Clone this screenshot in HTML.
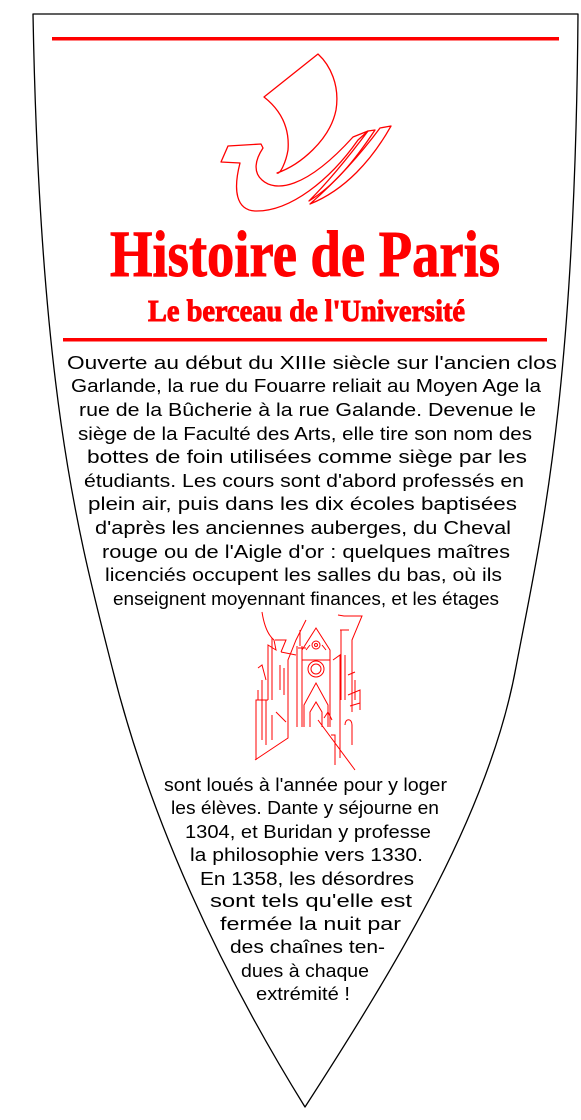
<!DOCTYPE html>
<html><head><meta charset="utf-8"><style>
html,body{margin:0;padding:0;background:#fff;width:581px;height:1120px;overflow:hidden}
svg{display:block}
.b{font-family:"Liberation Sans",sans-serif;font-size:18px;fill:#000}
.t{font-family:"Liberation Serif",serif;font-weight:bold;fill:#f00;stroke:#f00}
</style></head><body>
<svg width="581" height="1120" viewBox="0 0 581 1120" xmlns="http://www.w3.org/2000/svg">
<path d="M33,14 L578,14 C575,400 540,540 516,667 C490,810 400,960 305,1107 C220,970 150,820 112,667 C80,540 40,400 33,14 Z" fill="#fff" stroke="#000" stroke-width="1.3" stroke-linejoin="round"/>
<rect x="52" y="37" width="507" height="3.5" fill="#f00"/>
<rect x="63" y="338" width="484" height="3.5" fill="#f00"/>
<g fill="none" stroke="#f00" stroke-width="1.3" stroke-linejoin="round">
<path d="M318,54 L264,97 C278,108 290,125 288,150 C286,162 280,175 277,173 C300,165 330,140 336,110 C340,85 330,65 318,54 Z"/>
<path d="M221,162 L228,146 L261,144 L263,148 C255,160 253,172 262,180 C275,192 305,190 353,137 L368,131 L358,140 C330,180 290,212 255,211 C236,210 233,190 240,163 Z"/>
<path d="M368,131 L375,130 C355,160 335,185 309,201 C330,180 350,155 368,131 Z"/>
<path d="M380,128 L391,126 C372,160 345,190 310,204 C335,182 360,155 380,128 Z"/>
</g>
<text class="t" x="110" y="276" font-size="66" stroke-width="1" textLength="390" lengthAdjust="spacingAndGlyphs">Histoire de Paris</text>
<text class="t" x="148" y="321" font-size="31" stroke-width="1" textLength="317" lengthAdjust="spacingAndGlyphs">Le berceau de l'Université</text>
<g class="b">
<text x="67" y="369" textLength="490" lengthAdjust="spacingAndGlyphs">Ouverte au début du XIIIe siècle sur l'ancien clos</text>
<text x="71" y="392" textLength="470" lengthAdjust="spacingAndGlyphs">Garlande, la rue du Fouarre reliait au Moyen Age la</text>
<text x="79" y="416" textLength="457" lengthAdjust="spacingAndGlyphs">rue de la Bûcherie à la rue Galande. Devenue le</text>
<text x="78" y="440" textLength="454" lengthAdjust="spacingAndGlyphs">siège de la Faculté des Arts, elle tire son nom des</text>
<text x="87" y="463" textLength="440" lengthAdjust="spacingAndGlyphs">bottes de foin utilisées comme siège par les</text>
<text x="84" y="487" textLength="440" lengthAdjust="spacingAndGlyphs">étudiants. Les cours sont d'abord professés en</text>
<text x="88" y="510" textLength="429" lengthAdjust="spacingAndGlyphs">plein air, puis dans les dix écoles baptisées</text>
<text x="95" y="534" textLength="416" lengthAdjust="spacingAndGlyphs">d'après les anciennes auberges, du Cheval</text>
<text x="102" y="558" textLength="408" lengthAdjust="spacingAndGlyphs">rouge ou de l'Aigle d'or : quelques maîtres</text>
<text x="105" y="581" textLength="397" lengthAdjust="spacingAndGlyphs">licenciés occupent les salles du bas, où ils</text>
<text x="113" y="605" textLength="386" lengthAdjust="spacingAndGlyphs">enseignent moyennant finances, et les étages</text>
<text x="164" y="791" textLength="283" lengthAdjust="spacingAndGlyphs">sont loués à l'année pour y loger</text>
<text x="171" y="814" textLength="268" lengthAdjust="spacingAndGlyphs">les élèves. Dante y séjourne en</text>
<text x="185" y="838" textLength="246" lengthAdjust="spacingAndGlyphs">1304, et Buridan y professe</text>
<text x="190" y="861" textLength="233" lengthAdjust="spacingAndGlyphs">la philosophie vers 1330.</text>
<text x="200" y="885" textLength="214" lengthAdjust="spacingAndGlyphs">En 1358, les désordres</text>
<text x="210" y="907" textLength="202" lengthAdjust="spacingAndGlyphs">sont tels qu'elle est</text>
<text x="220" y="930" textLength="181" lengthAdjust="spacingAndGlyphs">fermée la nuit par</text>
<text x="230" y="953" textLength="155" lengthAdjust="spacingAndGlyphs">des chaînes ten-</text>
<text x="241" y="977" textLength="128" lengthAdjust="spacingAndGlyphs">dues à chaque</text>
<text x="256" y="1000" textLength="94" lengthAdjust="spacingAndGlyphs">extrémité !</text>
</g>
<g fill="none" stroke="#f00" stroke-width="1">
<path d="M262,612 C264,625 268,635 274,640 L276,650 L268,645 L268,700 M272,638 L272,700"/>
<path d="M255,760 L288,738 L288,660 L296,640 L306,620 M268,700 L256,700 L256,760 M258,700 L258,690"/>
<path d="M258,668 L262,665 L266,680 M262,680 L262,740 M266,700 L266,745 M272,715 L272,740 M276,712 L286,722"/>
<path d="M275,640 L286,640 L281,652 M281,652 L296,655 M280,665 L280,690 M284,668 L284,695"/>
<path d="M297,646 L297,727 M302,646 L302,727 M300,630 L300,646 M298,648 L306,648"/>
<path d="M302,650 L316,628 L330,650 L330,727 M302,660 L330,660 M306,650 L310,645 M322,645 L326,650"/>
<circle cx="316" cy="645" r="4"/><circle cx="316" cy="645" r="1.5"/>
<circle cx="316" cy="669" r="8"/><circle cx="316" cy="669" r="5"/>
<path d="M304,727 L304,705 L316,683 L328,705 L328,727 M310,727 L310,712 L316,702 L322,712 L322,727"/>
<path d="M330,727 L330,720 M318,720 L355,770 M331,735 L335,735 L335,765"/>
<path d="M338,615 L344,616 L362,616 L352,640 L352,712 M340,630 L349,630 M341,630 L341,700"/>
<path d="M333,660 L340,655 L340,720 M345,655 L345,700 M348,675 L355,672 M348,695 L360,690 L360,710 M355,680 L355,700 M350,706 L360,703"/>
<path d="M345,725 C345,718 352,718 352,725 L352,745 M340,720 L340,758 M324,718 L328,712 L332,720"/>
</g>
</svg>
</body></html>
